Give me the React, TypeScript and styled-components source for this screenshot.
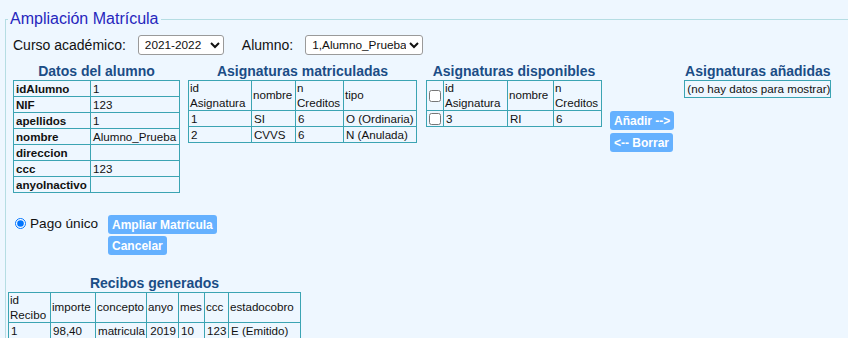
import React from "react";
import styled, { createGlobalStyle } from "styled-components";

const GlobalStyle = createGlobalStyle`
  html, body {
    margin: 0;
    padding: 0;
    background: #eef7ff;
    font-family: "Liberation Sans", Arial, sans-serif;
    overflow: hidden;
  }
`;

interface Column {
  label: React.ReactNode;
  width: number;
}

const alumno: [string, string][] = [
  ["idAlumno", "1"],
  ["NIF", "123"],
  ["apellidos", "1"],
  ["nombre", "Alumno_Prueba"],
  ["direccion", ""],
  ["ccc", "123"],
  ["anyoInactivo", ""],
];

const matriculadasCols: Column[] = [
  { label: <>id<br />Asignatura</>, width: 63 },
  { label: "nombre", width: 44 },
  { label: <>n<br />Creditos</>, width: 48 },
  { label: "tipo", width: 73 },
];

const matriculadas = [
  ["1", "SI", "6", "O (Ordinaria)"],
  ["2", "CVVS", "6", "N (Anulada)"],
];

const disponiblesCols: Column[] = [
  { label: <>id<br />Asignatura</>, width: 64 },
  { label: "nombre", width: 46 },
  { label: <>n<br />Creditos</>, width: 48 },
];

const recibosCols: Column[] = [
  { label: <>id<br />Recibo</>, width: 42 },
  { label: "importe", width: 45 },
  { label: "concepto", width: 51 },
  { label: "anyo", width: 32 },
  { label: "mes", width: 26 },
  { label: "ccc", width: 24 },
  { label: "estadocobro", width: 72 },
];

const recibos = [["1", "98,40", "matricula", "2019", "10", "123", "E (Emitido)"]];

const total = (cols: Column[]) => cols.reduce((s, c) => s + c.width, 0);

export default function App() {
  return (
    <>
      <GlobalStyle />
      <Frame>
        <Legend>Ampliación Matrícula</Legend>
        <FilterRow>
          <FilterLabel>Curso académico:</FilterLabel>
          <Select $width={86} defaultValue="2021-2022">
            <option>2021-2022</option>
          </Select>
          <FilterLabel $gap>Alumno:</FilterLabel>
          <Select $width={118} defaultValue="1,Alumno_Prueba">
            <option>1,Alumno_Prueba</option>
          </Select>
        </FilterRow>

        <Panels>
          <Section>
            <Heading>Datos del alumno</Heading>
            <Grid $width={166}>
              <colgroup>
                <Col $width={77} />
                <Col $width={89} />
              </colgroup>
              <tbody>
                {alumno.map(([k, v]) => (
                  <tr key={k}>
                    <KeyCell>{k}</KeyCell>
                    <Cell>{v}</Cell>
                  </tr>
                ))}
              </tbody>
            </Grid>
          </Section>

          <Section $gap={8}>
            <Heading>Asignaturas matriculadas</Heading>
            <Grid $width={total(matriculadasCols)}>
              <colgroup>
                {matriculadasCols.map((c, i) => (
                  <Col key={i} $width={c.width} />
                ))}
              </colgroup>
              <thead>
                <tr>
                  {matriculadasCols.map((c, i) => (
                    <HeadCell key={i}>{c.label}</HeadCell>
                  ))}
                </tr>
              </thead>
              <tbody>
                {matriculadas.map((r) => (
                  <tr key={r[0]}>
                    {r.map((v, i) => (
                      <Cell key={i}>{v}</Cell>
                    ))}
                  </tr>
                ))}
              </tbody>
            </Grid>
          </Section>

          <Section $gap={9}>
            <Heading>Asignaturas disponibles</Heading>
            <Grid $width={17 + total(disponiblesCols)}>
              <colgroup>
                <Col $width={17} />
                {disponiblesCols.map((c, i) => (
                  <Col key={i} $width={c.width} />
                ))}
              </colgroup>
              <thead>
                <tr>
                  <CheckCell>
                    <Check type="checkbox" />
                  </CheckCell>
                  {disponiblesCols.map((c, i) => (
                    <HeadCell key={i}>{c.label}</HeadCell>
                  ))}
                </tr>
              </thead>
              <tbody>
                <tr>
                  <CheckCell>
                    <Check type="checkbox" />
                  </CheckCell>
                  <Cell>3</Cell>
                  <Cell>RI</Cell>
                  <Cell>6</Cell>
                </tr>
              </tbody>
            </Grid>
          </Section>

          <MoveButtons>
            <Button>Añadir --&gt;</Button>
            <Button>&lt;-- Borrar</Button>
          </MoveButtons>

          <Section $gap={10}>
            <Heading>Asignaturas añadidas</Heading>
            <Grid $width={147}>
              <tbody>
                <tr>
                  <Cell $tall>(no hay datos para mostrar)</Cell>
                </tr>
              </tbody>
            </Grid>
          </Section>
        </Panels>

        <PaymentRow>
          <RadioLabel>
            <Radio type="radio" name="pago" defaultChecked />
            Pago único
          </RadioLabel>
          <ButtonStack>
            <Button>Ampliar Matrícula</Button>
            <Button>Cancelar</Button>
          </ButtonStack>
        </PaymentRow>

        <Receipts>
          <Heading>Recibos generados</Heading>
          <Grid $width={total(recibosCols)}>
            <colgroup>
              {recibosCols.map((c, i) => (
                <Col key={i} $width={c.width} />
              ))}
            </colgroup>
            <thead>
              <tr>
                {recibosCols.map((c, i) => (
                  <HeadCell key={i}>{c.label}</HeadCell>
                ))}
              </tr>
            </thead>
            <tbody>
              {recibos.map((r) => (
                <tr key={r[0]}>
                  {r.map((v, i) => (
                    <Cell key={i} $right={i === 3 || i === 5}>
                      {v}
                    </Cell>
                  ))}
                </tr>
              ))}
            </tbody>
          </Grid>
        </Receipts>
      </Frame>
    </>
  );
}

const Frame = styled.fieldset`
  margin: 10px 0 0 5px;
  padding: 8px 0 20px 7px;
  border: 1px solid #b5dde3;
  border-right: none;
  border-bottom: none;
  min-width: 0;
`;

const Legend = styled.legend`
  color: #2626bd;
  font-size: 16px;
  padding: 0 2px;
  margin-left: -5px;
`;

const FilterRow = styled.div`
  display: flex;
  align-items: center;
  height: 20px;
  margin-top: -1px;
`;

const FilterLabel = styled.span<{ $gap?: boolean }>`
  font-size: 14px;
  color: #111;
  margin-left: ${({ $gap }) => ($gap ? "18px" : "0")};
  margin-right: 12px;
`;

const Select = styled.select<{ $width: number }>`
  width: ${({ $width }) => $width}px;
  height: 20px;
  font-family: "Liberation Sans", Arial, sans-serif;
  font-size: 11.8px;
  color: #111;
  background: #fff;
  border: 1px solid #9a9a9a;
  border-radius: 3px;
  padding: 0 0 0 2px;
`;

const Panels = styled.div`
  display: flex;
  align-items: flex-start;
  margin-top: 8px;
`;

const Section = styled.div<{ $gap?: number }>`
  display: flex;
  flex-direction: column;
  align-items: center;
  margin-left: ${({ $gap }) => $gap ?? 0}px;
`;

const Heading = styled.div`
  font-size: 14px;
  font-weight: bold;
  color: #1b4d86;
  line-height: 17px;
  white-space: nowrap;
`;

const Grid = styled.table<{ $width: number }>`
  width: ${({ $width }) => $width}px;
  border-collapse: collapse;
  table-layout: fixed;
  font-size: 11.6px;
  color: #111;
`;

const Col = styled.col<{ $width: number }>`
  width: ${({ $width }) => $width}px;
`;

const Cell = styled.td<{ $right?: boolean; $tall?: boolean }>`
  border: 1px solid #3ba4b3;
  padding: 0 2px;
  line-height: ${({ $tall }) => ($tall ? 16 : 15)}px;
  white-space: nowrap;
  overflow: hidden;
  text-align: ${({ $right }) => ($right ? "right" : "left")};
`;

const KeyCell = styled(Cell)`
  font-weight: bold;
`;

const HeadCell = styled.th`
  border: 1px solid #3ba4b3;
  padding: 0 1px;
  font-weight: normal;
  text-align: left;
  line-height: 14.5px;
  white-space: nowrap;
`;

const CheckCell = styled.td`
  border: 1px solid #3ba4b3;
  padding: 0 1px;
  text-align: center;
`;

const Check = styled.input`
  width: 12px;
  height: 12px;
  margin: 0;
  vertical-align: middle;
`;

const MoveButtons = styled.div`
  display: flex;
  flex-direction: column;
  gap: 3px;
  margin: 48px 0 0 8px;
`;

const Button = styled.button`
  align-self: flex-start;
  background: #65b1ff;
  color: #fff;
  border: none;
  border-radius: 3px;
  font-family: "Liberation Sans", Arial, sans-serif;
  font-size: 12px;
  font-weight: bold;
  height: 19px;
  padding: 0 4px;
  white-space: nowrap;
  cursor: pointer;
`;

const PaymentRow = styled.div`
  display: flex;
  align-items: baseline;
  margin-top: 22px;
  margin-left: 2px;
`;

const RadioLabel = styled.label`
  display: flex;
  align-items: center;
  gap: 4px;
  font-size: 13.6px;
  color: #111;
  margin-right: 10px;
`;

const Radio = styled.input`
  width: 11px;
  height: 11px;
  margin: 0;
`;

const ButtonStack = styled.div`
  display: flex;
  flex-direction: column;
  gap: 2px;
`;

const Receipts = styled.div`
  display: flex;
  width: fit-content;
  flex-direction: column;
  align-items: center;
  margin-top: 20px;
  margin-left: -5px;
`;
